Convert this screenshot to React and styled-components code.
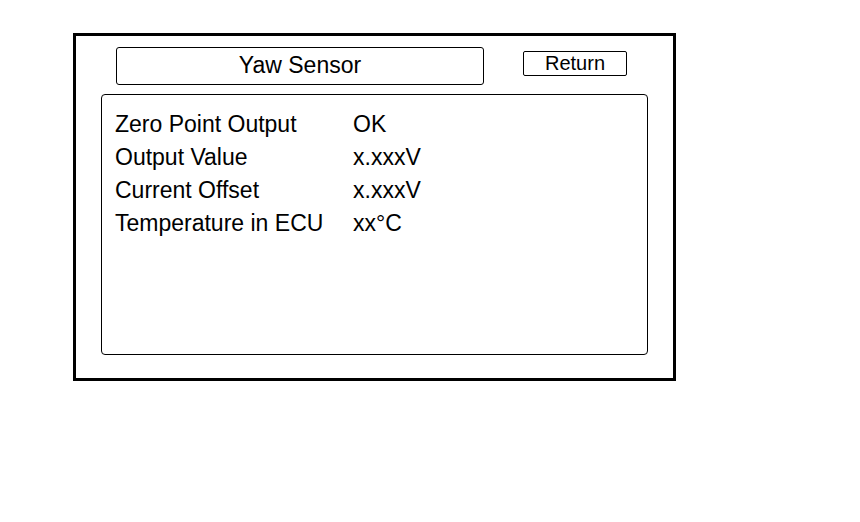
import styled, { createGlobalStyle } from 'styled-components';

const GlobalStyle = createGlobalStyle`
  body {
    margin: 0;
    background: #ffffff;
    font-family: 'Liberation Sans', Arial, sans-serif;
    color: #000;
  }
`;

const Frame = styled.div`
  box-sizing: border-box;
  margin: 33px 0 0 73px;
  width: 603px;
  height: 348px;
  border: 3px solid #000;
  padding: 11px 25px 23px 25px;
  display: flex;
  flex-direction: column;
  gap: 9px;
`;

const Header = styled.div`
  display: flex;
  align-items: center;
  padding-left: 15px;
  gap: 39px;
`;

const TitleBox = styled.div`
  box-sizing: border-box;
  width: 368px;
  height: 38px;
  border: 1.5px solid #000;
  border-radius: 3px;
  display: flex;
  align-items: center;
  justify-content: center;
  font-size: 23px;
  padding-bottom: 1px;
`;

const ReturnButton = styled.button`
  box-sizing: border-box;
  width: 104px;
  height: 25px;
  margin-top: -5px;
  border: 1.5px solid #000;
  border-radius: 2px;
  background: #fff;
  font-family: 'Liberation Sans', Arial, sans-serif;
  font-size: 20px;
  line-height: 20px;
  color: #000;
  padding: 0 0 1px;
  cursor: pointer;
`;

const Panel = styled.div`
  box-sizing: border-box;
  flex: 1;
  border: 1.5px solid #000;
  border-radius: 4px;
  padding: 13px 13px;
`;

const Row = styled.div`
  display: grid;
  grid-template-columns: 238px 1fr;
  font-size: 23px;
  line-height: 33px;
  height: 33px;
`;

const items = [
  ['Zero Point Output', 'OK'],
  ['Output Value', 'x.xxxV'],
  ['Current Offset', 'x.xxxV'],
  ['Temperature in ECU', 'xx°C'],
];

export default function App() {
  return (
    <>
      <GlobalStyle />
      <Frame>
        <Header>
          <TitleBox>Yaw Sensor</TitleBox>
          <ReturnButton>Return</ReturnButton>
        </Header>
        <Panel>
          {items.map(([label, value]) => (
            <Row key={label}>
              <span>{label}</span>
              <span>{value}</span>
            </Row>
          ))}
        </Panel>
      </Frame>
    </>
  );
}
